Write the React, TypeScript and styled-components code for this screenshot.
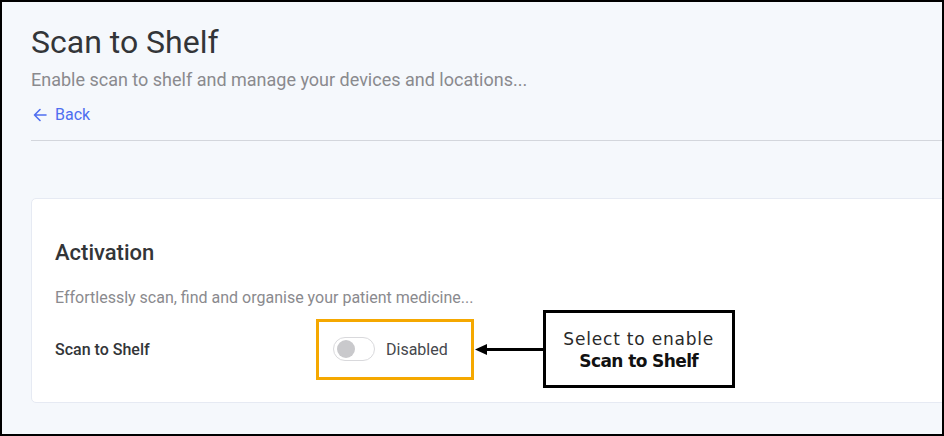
import React from "react";
import styled, { createGlobalStyle } from "styled-components";

const GlobalStyle = createGlobalStyle`
  html, body { margin: 0; padding: 0; }
  body { font-family: Roboto, "Noto Sans", sans-serif; }
  * { box-sizing: border-box; }
`;

const Frame = styled.div`
  width: 944px;
  height: 436px;
  border: 2px solid #000;
  background: #f5f8fc;
  overflow: hidden;
`;

const Content = styled.div`
  padding: 20px 0 0 29px;
  margin-right: -40px;
`;

const Title = styled.h1`
  margin: 0;
  font-size: 32px;
  line-height: 40px;
  font-weight: 400;
  color: #333538;
`;

const Subtitle = styled.p`
  margin: 6px 0 0;
  font-size: 18px;
  line-height: 24px;
  color: #8a8a8e;
`;

const BackLink = styled.a`
  margin-top: 11px;
  display: inline-flex;
  align-items: center;
  gap: 8px;
  font-size: 16px;
  line-height: 24px;
  color: #4f6ef0;
  text-decoration: none;
  cursor: pointer;
  padding-left: 2px;
`;

const Divider = styled.hr`
  margin: 13px 0 0;
  border: 0;
  height: 1px;
  background: #d3d6dc;
`;

const Card = styled.section`
  margin-top: 57px;
  background: #fff;
  border: 1px solid #e6eaf3;
  border-radius: 5px;
  padding: 40px 23px 14px;
`;

const CardTitle = styled.h2`
  margin: 0;
  font-size: 22px;
  line-height: 28px;
  font-weight: 500;
  color: #333538;
`;

const CardText = styled.p`
  margin: 19px 0 0;
  font-size: 16px;
  line-height: 24px;
  color: #8a8a8e;
`;

const Row = styled.div`
  display: flex;
  align-items: center;
`;

const Label = styled.span`
  width: 261px;
  font-size: 16px;
  font-weight: 500;
  color: #333538;
`;

const Highlight = styled.div`
  display: flex;
  align-items: center;
  gap: 11px;
  height: 61px;
  padding: 0 23px 0 14px;
  border: 3px solid #f5a800;
`;

const Track = styled.span`
  position: relative;
  width: 42px;
  height: 24px;
  border-radius: 12px;
  border: 1px solid #d9d9dc;
  background: #fff;
`;

const Knob = styled.span`
  position: absolute;
  left: 3px;
  top: 2px;
  width: 18px;
  height: 18px;
  border-radius: 50%;
  background: #c9c9cc;
`;

const StateText = styled.span`
  font-size: 16px;
  color: #45474c;
`;

const Arrow = styled.svg`
  display: block;
  flex: none;
`;

const Callout = styled.div`
  width: 192px;
  height: 78px;
  border: 3px solid #000;
  background: #fff;
  display: flex;
  flex-direction: column;
  align-items: center;
  justify-content: center;
  padding-top: 1px;
  font-family: "DejaVu Sans", sans-serif;
  font-size: 17px;
  line-height: 22px;
`;

const CalloutLine = styled.span<{ $bold?: boolean }>`
  font-weight: ${(p) => (p.$bold ? 700 : 400)};
  color: ${(p) => (p.$bold ? "#111" : "#2a2a2a")};
  letter-spacing: ${(p) => (p.$bold ? "-0.6px" : "0.8px")};
`;

export default function App() {
  return (
    <>
      <GlobalStyle />
      <Frame>
        <Content>
          <Title>Scan to Shelf</Title>
          <Subtitle>Enable scan to shelf and manage your devices and locations...</Subtitle>
          <BackLink>
            <svg width="14" height="14" viewBox="0 0 14 14" fill="none" stroke="currentColor" strokeWidth="1.6" strokeLinecap="round" strokeLinejoin="round">
              <path d="M13 7H1.5M7 1.5L1.5 7L7 12.5" />
            </svg>
            Back
          </BackLink>
          <Divider />
          <Card>
            <CardTitle>Activation</CardTitle>
            <CardText>Effortlessly scan, find and organise your patient medicine...</CardText>
            <Row>
              <Label>Scan to Shelf</Label>
              <Highlight>
                <Track>
                  <Knob />
                </Track>
                <StateText>Disabled</StateText>
              </Highlight>
              <Arrow width="69" height="14" viewBox="0 0 69 14">
                <path d="M1 7.5L13 2V13Z" fill="#000" />
                <rect x="11" y="6" width="58" height="3" fill="#000" />
              </Arrow>
              <Callout>
                <CalloutLine>Select to enable</CalloutLine>
                <CalloutLine $bold>Scan to Shelf</CalloutLine>
              </Callout>
            </Row>
          </Card>
        </Content>
      </Frame>
    </>
  );
}
